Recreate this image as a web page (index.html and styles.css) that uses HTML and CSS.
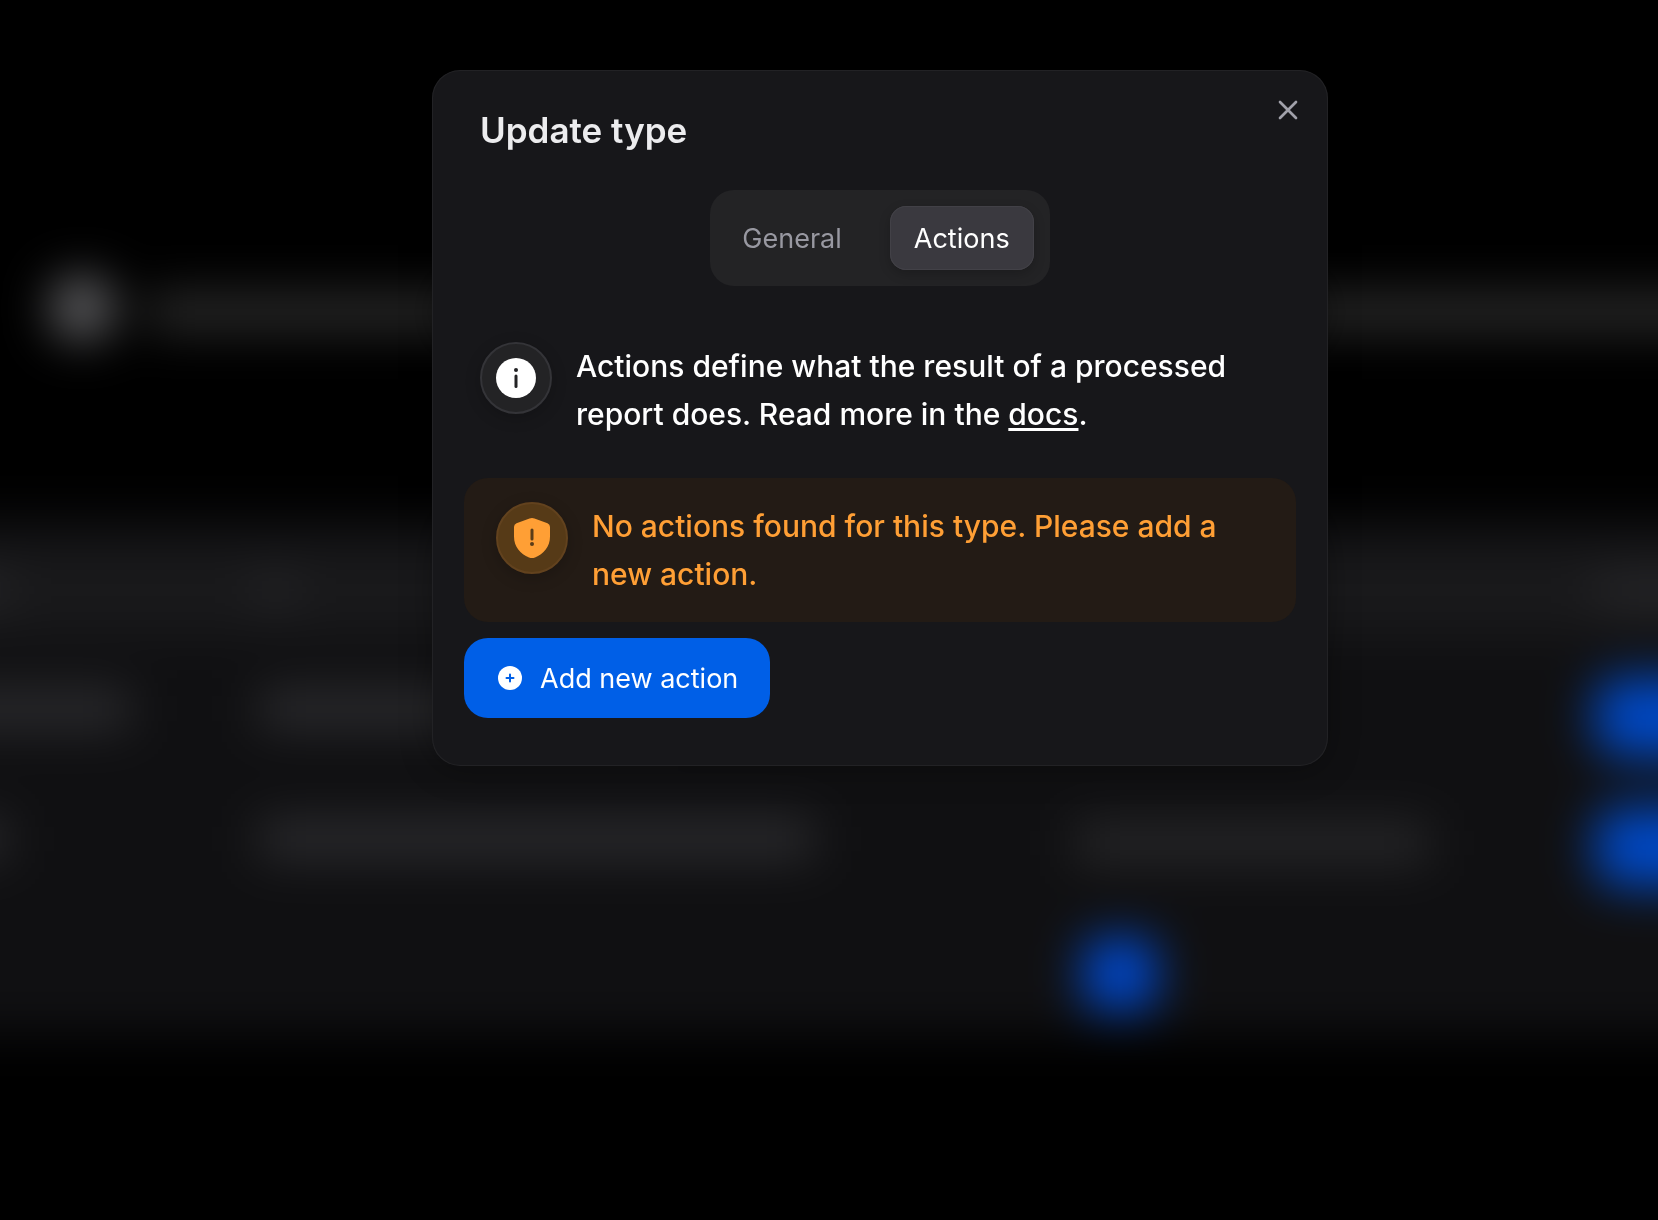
FILE: index.html
```html
<!DOCTYPE html>
<html lang="en">
	<head>
		<meta charset="UTF-8">
		<meta name="viewport" content="width=device-width, initial-scale=1.0">
		<title>Update type</title>
		<link rel="stylesheet" href="styles.css">
	</head>
	<body>
		<!-- blurred page behind the modal -->
		<div class="backdrop" aria-hidden="true">
			<div class="backdrop-page">
				<div class="bg-notice">
					<div class="bg-dot"></div>
					<div class="bg-line"></div>
				</div>
				<div class="bg-table">
					<div class="bg-row bg-head">
						<div class="bg-text w-short"></div>
						<div class="bg-text w-tiny"></div>
						<div></div>
						<div class="bg-text w-full"></div>
					</div>
					<div class="bg-row">
						<div class="bg-text w-medium"></div>
						<div class="bg-text w-half"></div>
						<div></div>
						<div class="bg-button"></div>
					</div>
					<div class="bg-row">
						<div class="bg-text w-short"></div>
						<div class="bg-text w-long"></div>
						<div class="bg-text w-long dim"></div>
						<div class="bg-button"></div>
					</div>
					<div class="bg-pages">
						<div class="bg-pager"><div class="bg-page"></div></div>
					</div>
				</div>
			</div>
		</div>

		<main class="overlay">
			<div class="modal" role="dialog" aria-modal="true" aria-labelledby="modal-title">
				<button class="close-btn" type="button" aria-label="Close">
					<svg viewBox="0 0 24 24" width="32" height="32" fill="none" stroke="currentColor" stroke-width="2" stroke-linecap="round"><path d="M18 6L6 18M6 6l12 12"/></svg>
				</button>

				<h1 id="modal-title" class="modal-title">Update type</h1>

				<div class="modal-body">
					<div class="tabs" role="tablist">
						<button class="tab" type="button" role="tab" aria-selected="false">General</button>
						<button class="tab tab-active" type="button" role="tab" aria-selected="true">Actions</button>
					</div>

					<div class="alert alert-info">
						<div class="alert-icon">
							<svg viewBox="0 0 40 40" width="40" height="40">
								<circle cx="20" cy="20" r="20" fill="#fff"/>
								<circle cx="20" cy="12" r="2" fill="#232325"/>
								<path d="M20 18v10.500" stroke="#232325" stroke-width="3" stroke-linecap="round"/>
							</svg>
						</div>
						<p class="alert-text">Actions define what the result of a processed report does. Read more in the <a href="#">docs</a>.</p>
					</div>

					<div class="alert alert-warning">
						<div class="alert-icon">
							<svg viewBox="0 0 40 40" width="40" height="40">
								<path d="M17.500 .6q2.500-1.100 5 0l13 4.600Q38 6.200 38 9v9.500C38 29 31.500 36 23 39.400q-3 1.200-6 0C8.500 36 2 29 2 18.500V9q0-2.800 2.500-3.800z" fill="#ff9f35"/>
								<path d="M20 12v9" stroke="#5a3c18" stroke-width="3" stroke-linecap="round"/>
								<circle cx="20" cy="26" r="2" fill="#5a3c18"/>
							</svg>
						</div>
						<p class="alert-text">No actions found for this type. Please add a new action.</p>
					</div>

					<button class="add-btn" type="button">
						<svg viewBox="0 0 28 28" width="28" height="28">
							<circle cx="14" cy="14" r="12" fill="#fff"/>
							<path d="M14 10.500v7M10.500 14h7" stroke="#005fe7" stroke-width="2" stroke-linecap="round"/>
						</svg>
						Add new action
					</button>
				</div>
			</div>
		</main>
	</body>
</html>
```

FILE: styles.css
```css
* {
    margin: 0;
    padding: 0;
    box-sizing: border-box;
}

body {
    font-family: Inter, 'Liberation Sans', sans-serif;
    background: #000;
    color: #fff;
    min-height: 100vh;
}

button {
    border: none;
    background: none;
    font-family: inherit;
    color: inherit;
    cursor: pointer;
}

svg {
    display: block;
    flex-shrink: 0;
}

/* Backdrop */
.backdrop {
    position: fixed;
    inset: 0;
    overflow: hidden;
}

.backdrop-page {
    margin: 0 -64px;
    padding-top: 268px;
    filter: blur(24px);
}

.bg-notice {
    display: flex;
    align-items: center;
    gap: 32px;
    height: 80px;
    padding-left: 114px;
    margin-bottom: 170px;
}

.bg-dot {
    width: 64px;
    height: 64px;
    border-radius: 50%;
    background: #646467;
}

.bg-line {
    flex: 1;
    height: 36px;
    margin-top: 8px;
    background: #2e2e2e;
}

.bg-table {
    background: #101012;
    padding: 28px 0 24px;
}

.bg-row {
    display: grid;
    grid-template-columns: 323fr 816fr 520fr 127fr;
    align-items: center;
    height: 130px;
}

.bg-head {
    height: 88px;
    margin-bottom: 18px;
    background: #19191b;
}

.bg-text {
    height: 36px;
    margin-bottom: 16px;
    background: #2e2e31;
}

.bg-text.dim {
    margin-bottom: 8px;
    background: #29292b;
}

.bg-head .bg-text {
    height: 20px;
    margin-bottom: 0;
}

.w-tiny {
    width: 4%;
}

.w-short {
    width: 22%;
}

.w-medium {
    width: 60%;
}

.w-half {
    width: 50%;
}

.w-long {
    width: 68%;
}

.w-full {
    width: 100%;
}

.bg-button {
    height: 80px;
    border-radius: 24px 0 0 24px;
    background: #0048c4;
}

.bg-pages {
    display: grid;
    grid-template-columns: 1059fr 727fr;
    padding-top: 26px;
}

.bg-pager {
    grid-column: 2;
    width: 240px;
    padding-left: 89px;
}

.bg-page {
    width: 72px;
    height: 72px;
    border-radius: 16px;
    background: #0048cc;
}

/* Modal */
.overlay {
    position: relative;
    display: flex;
    justify-content: center;
    padding: 70px 32px 70px 134px;
}

.modal {
    position: relative;
    width: 100%;
    max-width: 896px;
    background: #17171a;
    border-radius: 28px;
    box-shadow: inset 0 0 1px 1px rgba(255, 255, 255, 0.06), 0 4px 32px rgba(0, 0, 0, 0.3);
}

.modal-title {
    padding: 32px 48px;
    font-size: 35px;
    font-weight: 600;
    line-height: 56px;
    color: #ececee;
}

.close-btn {
    position: absolute;
    top: 16px;
    right: 16px;
    padding: 8px;
    color: #a1a1aa;
}

.modal-body {
    display: flex;
    flex-direction: column;
    gap: 16px;
    padding: 0 32px 48px;
}

/* Tabs */
.tabs {
    display: flex;
    align-self: center;
    gap: 16px;
    padding: 16px;
    margin-bottom: 16px;
    background: #232325;
    border-radius: 24px;
}

.tab {
    height: 64px;
    padding: 0 32px 0 16px;
    border-radius: 16px;
    font-size: 27px;
    color: #9898a1;
}

.tab-active {
    padding: 0 24px;
    background: #3a393f;
    box-shadow: inset 0 0 0 1px #424147, 0 4px 12px rgba(0, 0, 0, 0.2);
    color: #fff;
}

/* Alerts */
.alert {
    display: flex;
    align-items: flex-start;
    gap: 24px;
    padding: 24px 32px;
    border-radius: 24px;
}

.alert-info {
    padding: 24px 16px;
}

.alert-warning {
    background: #231b15;
    color: #ff9f35;
}

.alert-icon {
    display: flex;
    align-items: center;
    justify-content: center;
    flex-shrink: 0;
    width: 72px;
    height: 72px;
    background: #232325;
    border: 2px solid #343438;
    border-radius: 50%;
    box-shadow: 0 4px 16px rgba(0, 0, 0, 0.2);
}

.alert-warning .alert-icon {
    background: #563a17;
    border-color: #62421e;
}

.alert-text {
    font-size: 30px;
    font-weight: 500;
    line-height: 48px;
}

.alert-text a {
    color: inherit;
    text-decoration-thickness: 3px;
    text-underline-offset: 3px;
}

.add-btn {
    display: flex;
    align-items: center;
    align-self: flex-start;
    gap: 16px;
    height: 80px;
    padding: 0 32px;
    background: #005fe7;
    border-radius: 24px;
    font-size: 27px;
}
```
